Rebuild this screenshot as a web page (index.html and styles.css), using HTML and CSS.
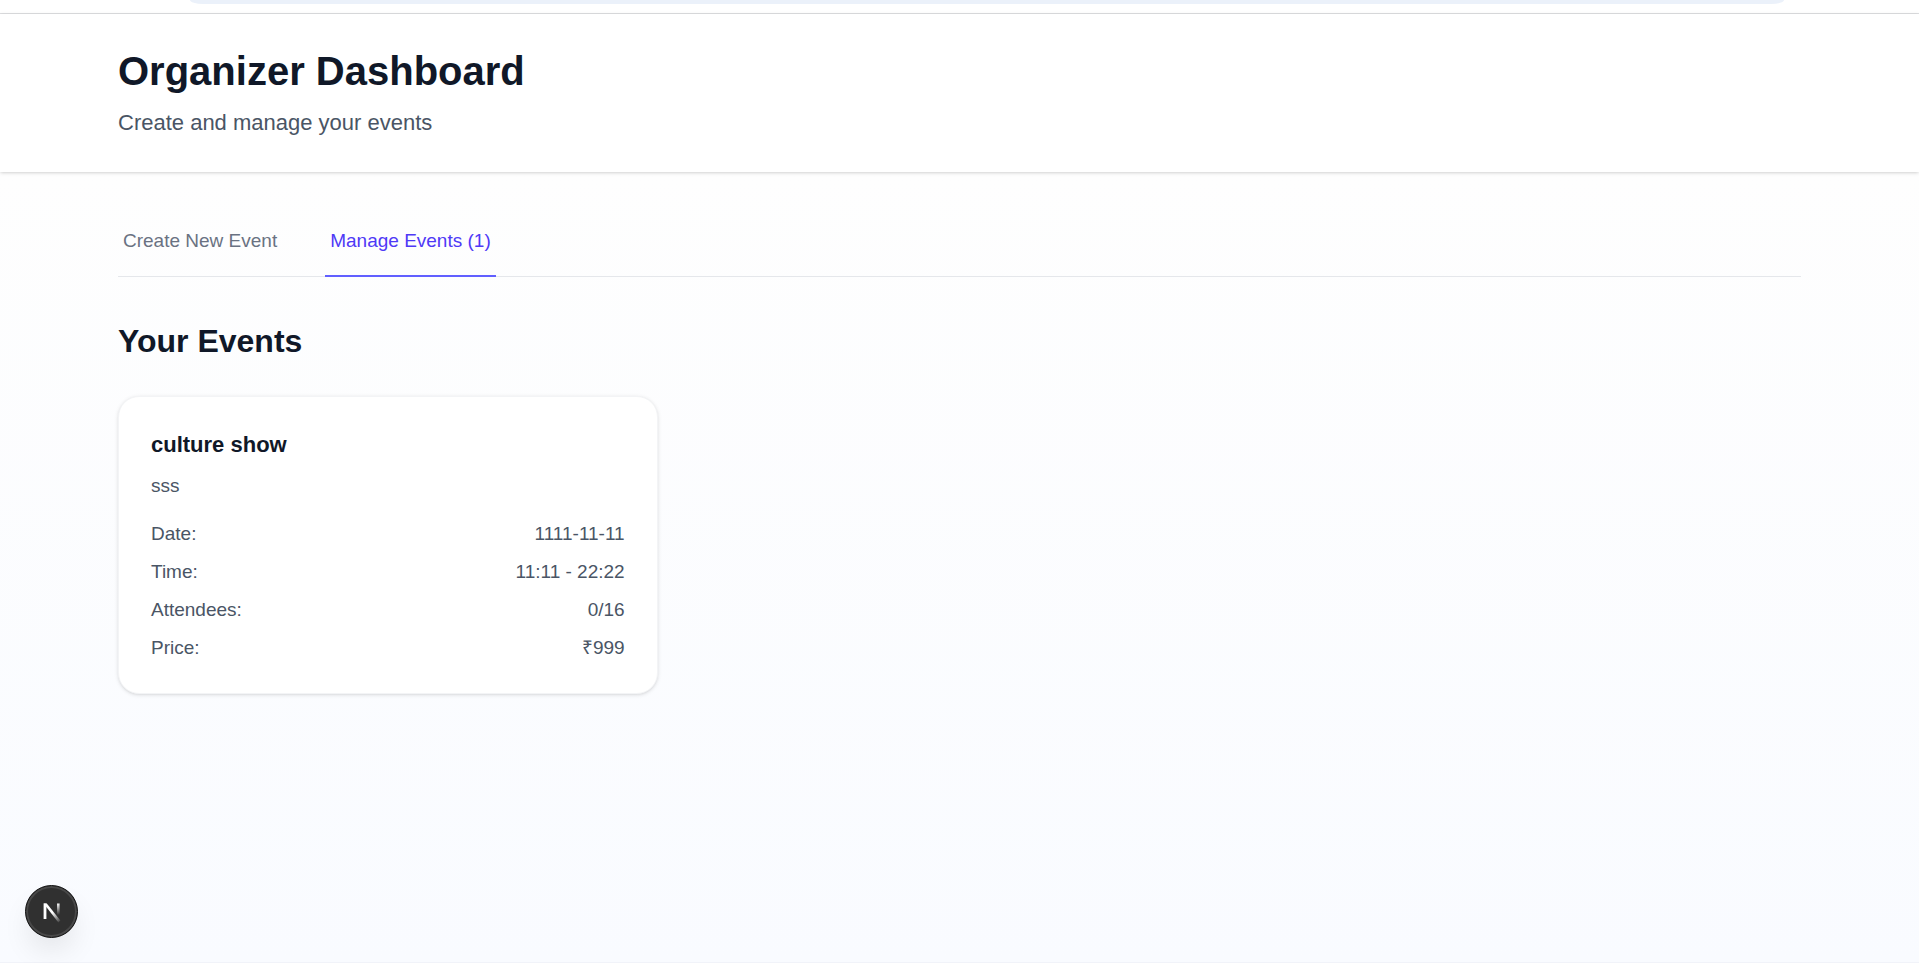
FILE: index.html
```html
<!DOCTYPE html>
<html lang="en">
<head>
<meta charset="utf-8">
<title>Organizer Dashboard</title>
<link rel="stylesheet" href="styles.css">
</head>
<body>
<div class="browser-edge"><div class="address-bar"></div></div>
<header class="page-header">
  <h1 class="page-title">Organizer Dashboard</h1>
  <p class="page-subtitle">Create and manage your events</p>
</header>
<main class="content">
  <nav class="tabs">
    <button class="tab" type="button">Create New Event</button>
    <button class="tab tab-active" type="button">Manage Events (1)</button>
  </nav>
  <h2 class="section-title">Your Events</h2>
  <div class="event-grid">
    <article class="event-card">
      <h3 class="event-name">culture show</h3>
      <p class="event-description">sss</p>
      <dl class="details">
        <div class="detail"><dt>Date:</dt><dd>1111-11-11</dd></div>
        <div class="detail"><dt>Time:</dt><dd>11:11 - 22:22</dd></div>
        <div class="detail"><dt>Attendees:</dt><dd>0/16</dd></div>
        <div class="detail"><dt>Price:</dt><dd>₹999</dd></div>
      </dl>
    </article>
  </div>
</main>
<button class="dev-badge" type="button" aria-label="Open developer tools">
  <svg width="20" height="22" viewBox="0 0 20 22" fill="none">
    <defs>
      <linearGradient id="diagonal" gradientUnits="userSpaceOnUse" x1="10" y1="12" x2="18" y2="22">
        <stop stop-color="#fff"/><stop offset="1" stop-color="#fff" stop-opacity="0"/>
      </linearGradient>
      <linearGradient id="stem" gradientUnits="userSpaceOnUse" x1="16" y1="2" x2="16" y2="14">
        <stop stop-color="#fff"/><stop offset="1" stop-color="#fff" stop-opacity="0"/>
      </linearGradient>
    </defs>
    <path d="M3 18V2.5" stroke="#fff" stroke-width="2.8"/>
    <path d="M1.6 2.5H4.8L18.4 19.6L16.4 21.4Z" fill="url(#diagonal)"/>
    <path d="M16.3 2.5V14" stroke="url(#stem)" stroke-width="2.6"/>
  </svg>
</button>
</body>
</html>
```
FILE: styles.css
```css
* { box-sizing: border-box; }

body {
  display: flex;
  flex-direction: column;
  min-height: 100vh;
  margin: 0;
  font: 19px/27px "Liberation Sans", Arial, sans-serif;
  color: #4a5565;
  background: #fff;
}

h1, h2, h3, p, dl, dd { margin: 0; }

.browser-edge {
  height: 14px;
  padding: 0 135px 0 190px;
  background: #fff;
  border-bottom: 1px solid #dedfe1;
}

.address-bar {
  height: 4px;
  background: #ebf1fa;
  border-radius: 0 0 13px 13px / 0 0 4px 4px;
}

.page-header {
  position: relative;
  padding: 33px 118px;
  background: #fff;
  box-shadow: 0 1px 4px rgba(0, 0, 0, 0.12), 0 1px 3px -1px rgba(0, 0, 0, 0.12);
}

.page-title {
  margin-bottom: 12px;
  font-size: 40px;
  line-height: 48px;
  color: #101828;
}

.page-subtitle {
  font-size: 22px;
  line-height: 32px;
}

.content {
  flex: 1;
  padding: 43px 118px;
  background: linear-gradient(#fefefe, #f9fbff);
  border-bottom: 1px solid #f1f3f9;
}

.tabs {
  display: flex;
  gap: 43px;
  margin-bottom: 43px;
  border-bottom: 1px solid #e5e7eb;
}

.tab {
  margin: 0 0 -1px;
  padding: 12px 5px 21px;
  font: inherit;
  color: #6a7282;
  background: none;
  border: 0;
  border-bottom: 2px solid transparent;
  cursor: pointer;
}

.tab-active {
  color: #4f39f6;
  border-bottom-color: #615fff;
}

.section-title {
  margin-bottom: 33px;
  font-size: 32px;
  line-height: 43px;
  color: #101828;
}

.event-grid {
  display: grid;
  grid-template-columns: repeat(3, 1fr);
  gap: 32px;
}

.event-card {
  padding: 32px;
  background: #fff;
  border: 1px solid #f3f4f6;
  border-radius: 21px;
  box-shadow: 0 1px 4px rgba(0, 0, 0, 0.1), 0 1px 3px -1px rgba(0, 0, 0, 0.1);
}

.event-name {
  margin-bottom: 11px;
  font-size: 22px;
  line-height: 32px;
  color: #101828;
}

.event-description { margin-bottom: 21px; }

.details {
  display: grid;
  gap: 11px;
}

.detail {
  display: flex;
  justify-content: space-between;
}

.dev-badge {
  position: fixed;
  bottom: 25px;
  left: 25px;
  display: flex;
  align-items: center;
  justify-content: center;
  width: 53px;
  height: 53px;
  padding: 0;
  background: #303030;
  border: 1px solid #111;
  border-radius: 50%;
  box-shadow: inset 0 0 0 2px #484848, 0 16px 32px -8px rgba(0, 0, 0, 0.14);
}
```
